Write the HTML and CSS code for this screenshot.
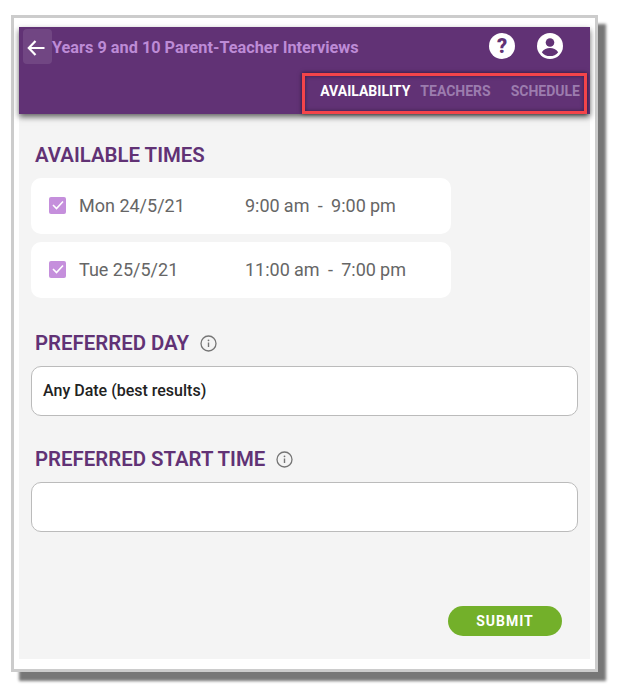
FILE: index.html
```html
<!DOCTYPE html>
<html lang="en">

<head>
    <meta charset="UTF-8">
    <meta name="viewport" content="width=device-width, initial-scale=1.0">
    <title>Parent-Teacher Interviews</title>
    <link rel="stylesheet" href="styles.css">
</head>

<body>

    <div class="frame">
        <div class="app">

            <header class="header">
                <div class="top-row">
                    <button class="back" type="button" aria-label="Back">
                        <svg width="18" height="16" viewBox="0 0 18 16" fill="none" stroke="#fff" stroke-width="2.2">
                            <path d="M17.500 8H2M8.500 1 1.800 8l6.700 7" />
                        </svg>
                    </button>
                    <h1 class="title">Years 9 and 10 Parent-Teacher Interviews</h1>
                    <svg class="top-icon help" width="26" height="26" viewBox="0 0 26 26">
                        <circle cx="13" cy="13" r="13" fill="#fff" />
                        <text x="13" y="20" text-anchor="middle" class="help-mark">?</text>
                    </svg>
                    <svg class="top-icon" width="26" height="26" viewBox="0 0 26 26">
                        <circle cx="13" cy="13" r="13" fill="#fff" />
                        <circle cx="13" cy="9.5" r="4.3" fill="#613275" />
                        <path d="M4.8 19.2c2-3 5-4.2 8.2-4.2s6.200 1.200 8.200 4.200c-2 2.600-4.800 3.900-8.200 3.900s-6.200-1.300-8.200-3.900z" fill="#613275" />
                    </svg>
                </div>
                <nav class="tabs">
                    <a class="tab active">AVAILABILITY</a>
                    <a class="tab">TEACHERS</a>
                    <a class="tab">SCHEDULE</a>
                </nav>
            </header>

            <main class="content">
                <h2 class="section-title">AVAILABLE TIMES</h2>

                <div class="time-card">
                    <span class="check">
                        <svg width="12" height="10" viewBox="0 0 12 10" fill="none" stroke="#fff" stroke-width="1.6">
                            <path d="M1 5l3.500 3.500L11 1.500" />
                        </svg>
                    </span>
                    <span class="date">Mon 24/5/21</span>
                    <span class="hours">9:00 am &nbsp;-&nbsp; 9:00 pm</span>
                </div>

                <div class="time-card">
                    <span class="check">
                        <svg width="12" height="10" viewBox="0 0 12 10" fill="none" stroke="#fff" stroke-width="1.6">
                            <path d="M1 5l3.500 3.500L11 1.500" />
                        </svg>
                    </span>
                    <span class="date">Tue 25/5/21</span>
                    <span class="hours">11:00 am &nbsp;-&nbsp; 7:00 pm</span>
                </div>

                <h2 class="section-title with-info day-title">PREFERRED DAY
                    <svg class="info" width="17" height="17" viewBox="0 0 17 17">
                        <circle cx="8.500" cy="8.500" r="7.500" fill="none" stroke="#757575" stroke-width="1.300" />
                        <path d="M8.500 7.500v4.500" stroke="#757575" stroke-width="1.400" />
                        <circle cx="8.500" cy="5.300" r="0.900" fill="#757575" />
                    </svg>
                </h2>
                <div class="field">Any Date (best results)</div>

                <h2 class="section-title with-info time-title">PREFERRED START TIME
                    <svg class="info" width="17" height="17" viewBox="0 0 17 17">
                        <circle cx="8.500" cy="8.500" r="7.500" fill="none" stroke="#757575" stroke-width="1.300" />
                        <path d="M8.500 7.500v4.500" stroke="#757575" stroke-width="1.400" />
                        <circle cx="8.500" cy="5.300" r="0.900" fill="#757575" />
                    </svg>
                </h2>
                <div class="field"></div>

                <div class="actions">
                    <button class="submit" type="button">SUBMIT</button>
                </div>
            </main>

        </div>
    </div>

</body>

</html>
```

FILE: styles.css
```css
* {
    margin: 0;
    padding: 0;
    box-sizing: border-box;
}

body {
    font-family: Roboto, "Liberation Sans", sans-serif;
    background: #fff;
    padding: 15px 0 0 11px;
    min-height: 100vh;
}

.frame {
    width: 587px;
    height: 657px;
    padding: 9px 5px 10px 5px;
    background: #fff;
    border: 3px solid #ccc;
    position: relative;
}

/* drop shadow of the screenshot frame */
.frame::before {
    content: '';
    position: absolute;
    top: 6px;
    left: 5px;
    width: 587px;
    height: 657px;
    background: #777;
    filter: blur(1.500px);
    z-index: -1;
}

.app {
    height: 632px;
    background: #f4f4f4;
}

/* Header */
.header {
    height: 87px;
    background: #613275;
    box-shadow: 0 3px 6px rgba(0, 0, 0, 0.6);
}

.top-row {
    height: 38px;
    margin-bottom: 8px;
    display: flex;
    align-items: center;
    padding-left: 4px;
}

.back {
    width: 29px;
    height: 35px;
    padding: 3px 4px 0 0;
    border: none;
    border-radius: 4px;
    background: rgba(255, 255, 255, 0.1);
    display: flex;
    align-items: center;
    justify-content: center;
}

.title {
    margin-top: 2px;
    font-size: 16.300px;
    font-weight: 700;
    color: #bd8bd6;
    white-space: nowrap;
    flex: 1;
}

.top-icon {
    margin-right: 27px;
}

.help {
    margin-right: 22px;
}

.help-mark {
    font-family: Roboto, sans-serif;
    font-size: 20px;
    font-weight: 900;
    fill: #613275;
}

.tabs {
    width: 285px;
    height: 41px;
    margin-left: auto;
    margin-right: 3px;
    padding: 0 4px 6px 0;
    border: 3px solid #f4444a;
    box-shadow: 0 0 4px rgba(0, 0, 0, 0.6), inset 0 0 4px rgba(0, 0, 0, 0.4);
    display: flex;
    align-items: center;
    justify-content: flex-end;
}

.tab {
    font-size: 14px;
    font-weight: 700;
    color: #9c7cae;
    margin-left: 20px;
}

.tab.active {
    color: #fff;
    margin-right: -10px;
}

/* Content */
.content {
    padding: 29px 12px 0 12px;
}

.section-title {
    font-size: 20.400px;
    font-weight: 600;
    line-height: 24px;
    color: #613275;
    margin: 0 0 11px 4px;
}

.with-info {
    display: flex;
    align-items: center;
    gap: 11px;
}

.day-title {
    margin-top: 33px;
}

.time-title {
    margin-top: 31px;
}

.time-card {
    width: 420px;
    height: 56px;
    margin-bottom: 8px;
    padding: 0 0 2px 19px;
    background: #fff;
    border-radius: 10px;
    display: flex;
    align-items: center;
    font-size: 18px;
    color: #666;
}

.check {
    width: 17px;
    height: 17px;
    background: #c58fdc;
    border-radius: 2px;
    display: flex;
    align-items: center;
    justify-content: center;
    margin-left: -1px;
}

.date {
    width: 166px;
    margin-left: 13px;
}

.hours {
    word-spacing: -0.300px;
}

.field {
    width: 547px;
    height: 50px;
    padding: 0 11px 2px;
    background: #fff;
    border: 1px solid #bbb;
    border-radius: 10px;
    display: flex;
    align-items: center;
    font-size: 16px;
    font-weight: 500;
    color: #222;
}

.actions {
    display: flex;
    justify-content: flex-end;
    margin: 74px 16px 0 0;
}

.submit {
    width: 114px;
    height: 30px;
    border: none;
    border-radius: 15px;
    background: #73b02a;
    color: #fff;
    font-family: Roboto, sans-serif;
    font-size: 14px;
    font-weight: 700;
    letter-spacing: 1px;
}
```
